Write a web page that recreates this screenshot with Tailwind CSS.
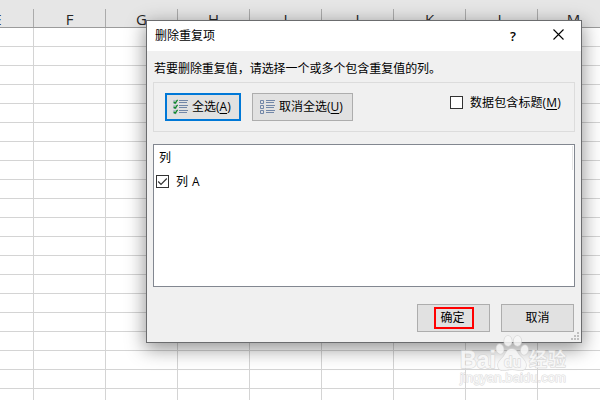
<!DOCTYPE html>
<html lang="zh-CN">
<head>
    <meta charset="UTF-8">
    <meta name="viewport" content="width=device-width, initial-scale=1.0">
    <title>删除重复项</title>
    <script src="https://cdn.jsdelivr.net/npm/@tailwindcss/browser@4"></script>
    <style>
        body {
            font-family: 'Open Sans', 'Noto Sans CJK SC', sans-serif;
        }
    </style>
</head>
<body class="relative w-[600px] h-[400px] overflow-hidden bg-white text-[12px] leading-[18px] text-black">

    <!-- Spreadsheet -->
    <div class="w-[600px] h-[400px] overflow-hidden">
        <div class="h-[28px] bg-[#e6e6e6] border-b border-[#9b9b9b] pt-[9px]">
            <div id="columnHeads" class="flex -ml-[38px] w-[648px] h-[18px] text-[15px] leading-[21px] text-[#262626] text-center"></div>
        </div>
        <div id="rows"></div>
    </div>

    <!-- Dialog -->
    <div class="absolute left-[146px] top-[20px] w-[436px] h-[323px] bg-[#f0f0f0] border border-[#6b6c6e] shadow-[0_5px_18px_1px_rgba(0,0,0,0.42)]">
        <div class="h-[30px] bg-white flex items-center pl-[8px]">
            <span class="flex-1 leading-[30px] h-[30px]">删除重复项</span>
            <span class="w-[12px] mr-[34px] -mt-px text-center text-[13px] font-semibold">?</span>
            <svg class="mr-[17px] -mt-[3px]" width="11" height="11" viewBox="0 0 11 11" fill="none" stroke="#000" stroke-width="1.1">
                <path d="M.5 .5l10 10M10.5 .5l-10 10"/>
            </svg>
        </div>

        <div class="px-[6px]">
            <p class="h-[31px] pt-[9px] pl-px whitespace-nowrap tracking-[-0.04px]">若要删除重复值，请选择一个或多个包含重复值的列。</p>

            <div class="h-[50px] w-[422px] border border-[#dcdcdc] flex items-start pt-[10px] pl-[11px]">
                <button class="w-[76px] h-[28px] bg-[#e1e1e1] border-2 border-[#0078d7] flex items-center pl-[6px] whitespace-nowrap">
                    <svg class="mr-[3px] -mt-px" width="16" height="16" viewBox="0 0 16 16" fill="none">
                        <g stroke="#b3bccd"><path d="M.5 1.5h3v3h-3zM.5 6.5h3v3h-3zM.5 11.5h3v3h-3z"/></g>
                        <g stroke="#138a2c" stroke-width="1.3"><path d="M.8 2.8l1.3 1.4L4.6 .9M.8 7.8l1.3 1.4L4.6 5.9M.8 12.8l1.3 1.4L4.6 10.9"/></g>
                        <g stroke="#7287a8"><path d="M6 1.5h9M6 3.5h8M6 6.5h9M6 8.5h8M6 11.5h9M6 13.5h8"/></g>
                    </svg>
                    <span>全选(<u class="underline-offset-2">A</u>)</span>
                </button>
                <button class="ml-[11px] w-[101px] h-[28px] bg-[#e1e1e1] border border-[#adadad] flex items-center pl-[7px] whitespace-nowrap">
                    <svg class="mr-[4px] -mt-px" width="15" height="16" viewBox="0 0 15 16" fill="none" stroke="#7287a8">
                        <path d="M.5 1.5h3v3h-3zM.5 6.5h3v3h-3zM.5 11.5h3v3h-3z"/>
                        <path d="M6 1.5h9M6 3.5h8M6 6.5h9M6 8.5h8M6 11.5h9M6 13.5h8"/>
                    </svg>
                    <span>取消全选(<u class="underline-offset-2">U</u>)</span>
                </button>
                <label class="flex items-center ml-[97px] whitespace-nowrap">
                    <span class="w-[13px] h-[13px] bg-white border border-[#333] mr-[7px]"></span>
                    <span class="mt-px tracking-[0.1px]">数据包含标题(<u class="underline-offset-2">M</u>)</span>
                </label>
            </div>

            <div class="mt-[12px] h-[143px] w-[422px] bg-white border border-[#828790]">
                <div class="flex justify-between h-[25px] pt-px pr-px pl-[5px]">
                    <span class="pt-[3px]">列</span>
                    <span class="w-px h-[24px] bg-[#e5e5e5]"></span>
                </div>
                <div class="flex items-center h-[22px] pl-[2px]">
                    <span class="w-[13px] h-[13px] border border-[#333] mr-[7px]">
                        <svg width="11" height="11" viewBox="0 0 11 11" fill="none" stroke="#333" stroke-width="1.2">
                            <path d="M1.2 5.5l2.8 2.8L9.8 2.5"/>
                        </svg>
                    </span>
                    <span class="mt-px [word-spacing:1px]">列 A</span>
                </div>
            </div>

            <div class="mt-[17px] flex justify-end gap-[11px] pr-px">
                <button class="w-[73px] h-[28px] bg-[#e1e1e1] border border-[#adadad] flex items-center justify-center">
                    <span class="w-[40px] h-[22px] border-2 border-[#f00] leading-[18px] pr-[2px]">确定</span>
                </button>
                <button class="w-[73px] h-[28px] bg-[#e1e1e1] border border-[#adadad] leading-[26px]">取消</button>
            </div>
        </div>

        <!-- resize grip -->
        <svg class="absolute right-[2px] bottom-[2px]" width="8" height="8" viewBox="0 0 8 8" fill="#bfbfbf">
            <path d="M6 0h2v2H6zM3 3h2v2H3zM6 3h2v2H6zM0 6h2v2H0zM3 6h2v2H3zM6 6h2v2H6z"/>
        </svg>
    </div>

    <!-- Watermark -->
    <svg class="absolute left-[454px] top-[330px] opacity-85" width="120" height="62" viewBox="0 0 120 62">
        <g fill="#f8f8f8" stroke="#d6d6d6" stroke-width="1.4" paint-order="stroke" stroke-linejoin="round" font-family="Liberation Sans, sans-serif" font-weight="bold">
            <text x="6" y="38" font-size="24" textLength="36" lengthAdjust="spacingAndGlyphs">Bai</text>
            <ellipse cx="46" cy="19" rx="3.6" ry="4.8" transform="rotate(-12 46 19)"/>
            <ellipse cx="54" cy="11" rx="3.8" ry="5.1"/>
            <ellipse cx="63.5" cy="11" rx="3.8" ry="5.1"/>
            <ellipse cx="70.5" cy="20" rx="3.6" ry="4.8" transform="rotate(12 70.5 20)"/>
            <path d="M58 19c-5 0-6 4-8 7s-6 5-6 9c0 5 4 6 8 5 5-1 8-1 12 0 4 1 8 0 8-5 0-4-3-6-6-9s-3-7-8-7z"/>
            <text x="50" y="37" font-size="15" textLength="17" lengthAdjust="spacingAndGlyphs">du</text>
            <text x="75" y="36" font-size="18" textLength="37" font-weight="500" font-family="Noto Sans CJK SC, sans-serif">经验</text>
            <text x="6" y="52" font-size="12.5" stroke-width="1" font-weight="normal" textLength="106" lengthAdjust="spacingAndGlyphs">jingyan.baidu.com</text>
        </g>
    </svg>

    <script>
        const columnHeads = document.getElementById('columnHeads');
        const rows = document.getElementById('rows');
        const columns = ['E', 'F', 'G', 'H', 'I', 'J', 'K', 'L', 'M'];

        columnHeads.innerHTML = columns.map(c => `<div class="w-[72px] shrink-0 border-r border-[#ababab]">${c}</div>`).join('');

        // 20 rows, the last one is cut off by the bottom of the window
        for (let i = 0; i < 20; i++) {
            const row = document.createElement('div');
            row.className = 'flex -ml-[38px] w-[648px] h-[19px] border-b border-[#d4d4d4]';
            row.innerHTML = columns.map(() => '<div class="w-[72px] shrink-0 border-r border-[#d4d4d4]"></div>').join('');
            rows.appendChild(row);
        }
    </script>
</body>
</html>
